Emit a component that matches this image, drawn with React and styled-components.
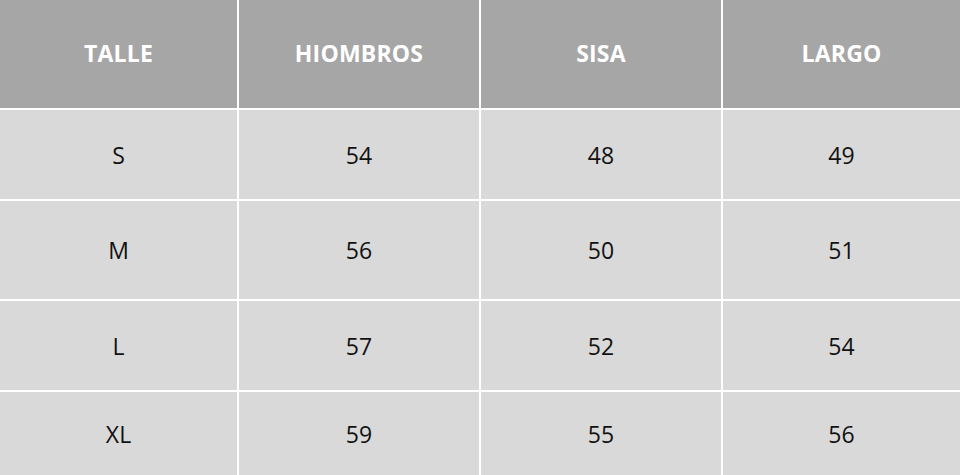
import React from "react";
import styled, { createGlobalStyle } from "styled-components";

const GlobalStyle = createGlobalStyle`
  html, body {
    margin: 0;
    padding: 0;
    background: #ffffff;
  }
  body {
    font-family: "Open Sans", "Liberation Sans", sans-serif;
  }
`;

const Table = styled.div`
  display: grid;
  grid-template-columns: 237px 240px 240px 237px;
  grid-template-rows: 108px 89px 98px 89px 83px;
  gap: 2px;
  width: 960px;
  height: 475px;
  background: #ffffff;
  overflow: hidden;
`;

const Cell = styled.div`
  display: flex;
  align-items: center;
  justify-content: center;
  background: ${(p) => (p.head ? "#a6a6a6" : "#d9d9d9")};
  color: ${(p) => (p.head ? "#ffffff" : "#111111")};
  font-size: ${(p) => (p.head ? "23px" : "23px")};
  font-weight: ${(p) => (p.head ? 700 : 400)};
  letter-spacing: ${(p) => (p.head ? "0.2px" : "0")};
  padding-bottom: ${(p) => (p.head ? "3px" : "0")};
`;

const headers = ["TALLE", "HIOMBROS", "SISA", "LARGO"];
const rows = [
  ["S", "54", "48", "49"],
  ["M", "56", "50", "51"],
  ["L", "57", "52", "54"],
  ["XL", "59", "55", "56"],
];

const App = () => {
  return (
    <>
      <GlobalStyle />
      <Table>
        {headers.map((h) => (
          <Cell head key={h}>
            {h}
          </Cell>
        ))}
        {rows.map((row, i) =>
          row.map((value, key) => <Cell key={i + "-" + key}>{value}</Cell>)
        )}
      </Table>
    </>
  );
};

export default App;
